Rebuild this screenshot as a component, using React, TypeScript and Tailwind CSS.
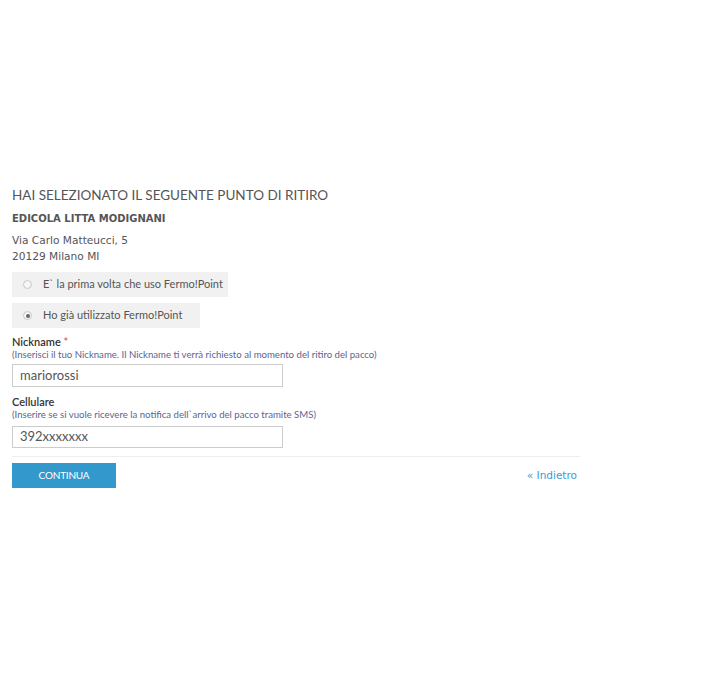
import React from "react";

export default function App() {
  return (
    <div className="w-[725px] h-[680px] bg-white">
      <div className="pt-[185px] pl-3 w-[580px]">
        <h2 className="text-[13.5px] leading-[20px] text-[#555] font-normal font-['Lato',sans-serif]">
          HAI SELEZIONATO IL SEGUENTE PUNTO DI RITIRO
        </h2>
        <div className="mt-[7px] text-[10px] leading-[14px] font-bold text-[#555] font-['DejaVu_Sans',sans-serif]">
          EDICOLA LITTA MODIGNANI
        </div>
        <div className="mt-[6px] text-[10.6px] leading-[16px] text-[#555] font-['DejaVu_Sans',sans-serif]">
          <div>Via Carlo Matteucci, 5</div>
          <div>20129 Milano MI</div>
        </div>
        <div className="mt-[8px] flex flex-col items-start gap-[6px] font-['Lato',sans-serif] text-[11px] text-[#555]">
          <label className="flex items-center h-[25px] bg-[#f1f1f1] pl-[11px] pr-[5px]">
            <span className="w-[9px] h-[9px] rounded-full border border-[#c8c8c8] bg-[#f6f6f6]" />
            <span className="ml-[11px]">E` la prima volta che uso Fermo!Point</span>
          </label>
          <label className="flex items-center h-[25px] bg-[#f1f1f1] pl-[11px] pr-[18px]">
            <span className="w-[9px] h-[9px] rounded-full border border-[#c8c8c8] bg-[#f6f6f6] flex items-center justify-center">
              <span className="w-[4px] h-[4px] rounded-full bg-[#666]" />
            </span>
            <span className="ml-[11px]">Ho già utilizzato Fermo!Point</span>
          </label>
        </div>
        <div className="mt-[7px] font-['Lato',sans-serif]">
          <div className="text-[11px] leading-[14px] text-[#333] font-semibold">
            Nickname <span className="text-[#e05a5a]">*</span>
          </div>
          <div className="text-[9.6px] leading-[12px] text-[#5a6494]">
            (Inserisci il tuo Nickname. Il Nickname ti verrà richiesto al momento del ritiro del pacco)
          </div>
          <div className="mt-[3px] w-[271px] h-[23px] border border-[#ccc] flex items-center pl-[7px] text-[13px] text-[#555]">
            mariorossi
          </div>
          <div className="mt-[8px] text-[11px] leading-[14px] text-[#333] font-semibold">
            Cellulare
          </div>
          <div className="text-[9.6px] leading-[12px] text-[#5a6494]">
            (Inserire se si vuole ricevere la notifica dell`arrivo del pacco tramite SMS)
          </div>
          <div className="mt-[5px] w-[271px] h-[22px] border border-[#ccc] flex items-center pl-[7px] text-[13px] text-[#555]">
            392xxxxxxx
          </div>
        </div>
        <div className="mt-[8px] h-px bg-[#eee] w-[568px]" />
        <div className="mt-[6px] w-[568px] flex items-center justify-between">
          <button className="w-[104px] h-[25px] bg-[#3399cc] text-white text-[10px] font-['Lato',sans-serif] tracking-[-0.2px]">
            CONTINUA
          </button>
          <a className="mr-[3px] text-[10.5px] text-[#3a9ad9] font-['DejaVu_Sans',sans-serif]">« Indietro</a>
        </div>
      </div>
    </div>
  );
}
